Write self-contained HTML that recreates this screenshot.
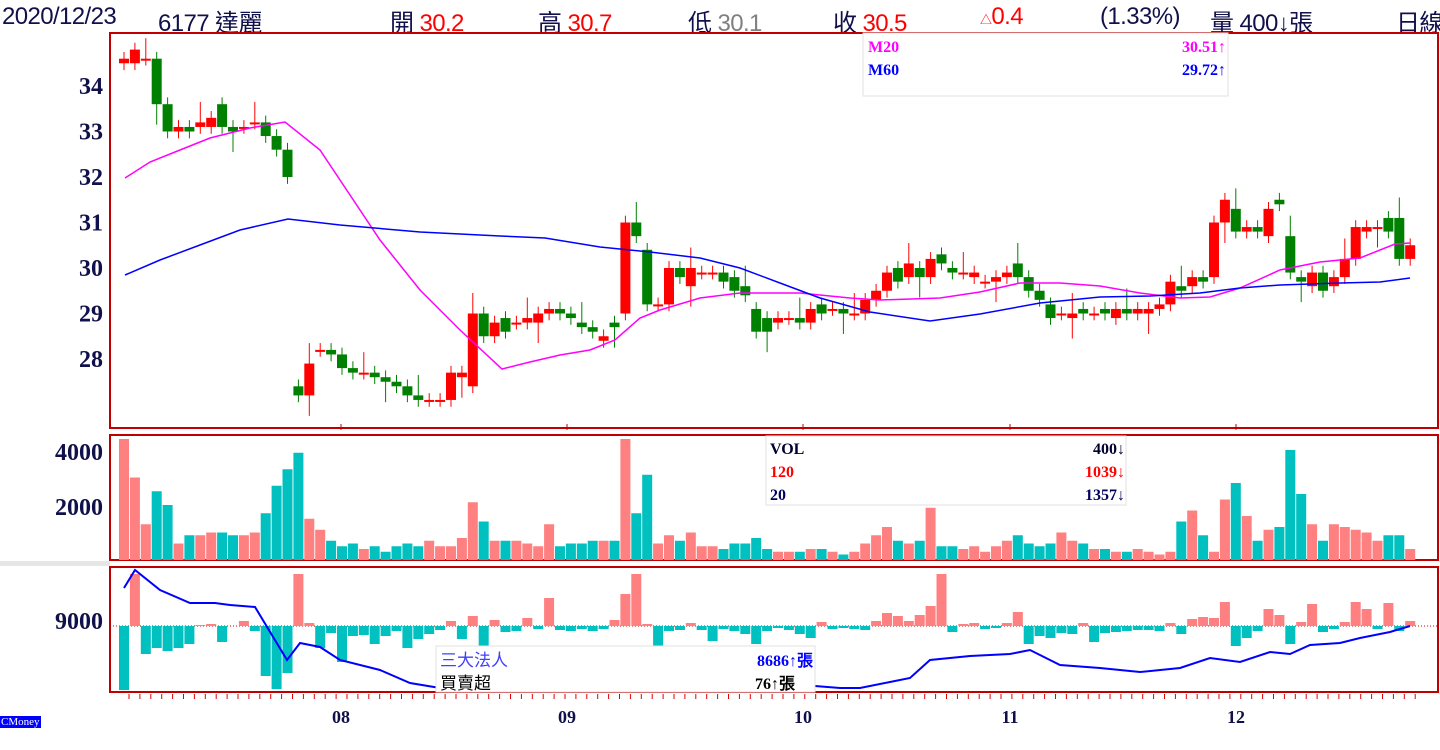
<!DOCTYPE html>
<html><head><meta charset="utf-8"><style>
body{margin:0;width:1440px;height:750px;background:#fff;overflow:hidden;position:relative;font-family:"Liberation Sans","Noto Sans CJK TC",sans-serif}
.h{position:absolute;top:3px;font-size:24px;color:#10104a;white-space:nowrap;letter-spacing:-0.6px}
.r{color:#f00}.g{color:#808080}
svg{position:absolute;left:0;top:0}
</style></head><body>
<div class="h" style="left:2px">2020/12/23</div>
<div class="h" style="left:158px">6177 達麗</div>
<div class="h" style="left:390px">開 <span class="r">30.2</span></div>
<div class="h" style="left:538px">高 <span class="r">30.7</span></div>
<div class="h" style="left:688px">低 <span class="g">30.1</span></div>
<div class="h" style="left:833px">收 <span class="r">30.5</span></div>
<div class="h" style="left:980px"><span class="r"><span style="font-size:12px">△</span>0.4</span></div>
<div class="h" style="left:1100px">(1.33%)</div>
<div class="h" style="left:1210px">量 400↓張</div>
<div class="h" style="left:1396px">日線</div>
<svg id="s" width="1440" height="750"></svg>
<div style="position:absolute;left:0;top:716px;background:#00f;color:#fff;font:11px 'Liberation Serif',serif;padding:0 1px">CMoney</div>
<script>
var C=[[34.5,34.6],[34.5,34.8],[34.6,34.6],[34.6,33.6],[33.6,33.0],[33.0,33.1],[33.1,33.0],[33.1,33.2],[33.1,33.3],[33.6,33.1],[33.1,33.0],[33.1,33.1],[33.2,33.2],[33.2,32.9],[32.9,32.6],[32.6,32.0],
[27.4,27.2],[27.2,27.9],[28.2,28.2],[28.2,28.1],[28.1,27.8],[27.8,27.7],[27.7,27.7],[27.7,27.6],[27.6,27.5],[27.5,27.4],[27.4,27.2],[27.2,27.1],[27.1,27.1],[27.1,27.1],[27.1,27.7],[27.6,27.7],[27.4,29.0],[29.0,28.5],[28.5,28.8],[28.9,28.6],[28.8,28.8],[28.8,28.9],[28.8,29.0],[29.0,29.1],[29.1,29.0],[29.0,28.9],[28.8,28.7],[28.7,28.6],[28.4,28.5],[28.8,28.7],[29.0,31.0],[31.0,30.7],[30.4,29.2],[29.2,29.2],[29.2,30.0],[30.0,29.8],[29.6,30.0],[29.9,29.9],[29.9,29.9],[29.9,29.7],[29.8,29.5],[29.6,29.4],[29.1,28.6],[28.9,28.6],[28.8,28.9],[28.9,28.9],[28.9,28.8],[28.8,29.1],[29.2,29.0],[29.1,29.1],[29.1,29.0],[29.0,29.0],[29.0,29.3],[29.3,29.5],[29.5,29.9],[30.0,29.7],[29.8,30.1],[30.0,29.8],[29.8,30.2],[30.3,30.1],[30.0,29.9],[29.9,29.9],[29.8,29.9],[29.7,29.7],[29.7,29.8],[29.8,29.9],[30.1,29.8],[29.8,29.5],[29.5,29.3],[29.2,28.9],[29.0,29.0],[28.9,29.0],[29.1,29.0],[29.0,29.0],[29.1,29.0],[28.9,29.1],[29.1,29.0],[29.0,29.1],[29.0,29.1],[29.1,29.2],[29.2,29.7],[29.6,29.5],[29.6,29.8],[29.8,29.7],[29.8,31.0],[31.0,31.5],[31.3,30.8],[30.8,30.9],[30.9,30.8],[30.7,31.3],[31.5,31.4],[30.7,29.9],[29.8,29.7],[29.6,29.9],[29.9,29.5],[29.6,29.8],[29.8,30.2],[30.2,30.9],[30.8,30.9],[30.9,30.9],[31.1,30.8],[31.1,30.2],[30.2,30.5]];
var V=[4400,3000,1300,2500,2000,600,900,900,1000,1000,900,900,1000,1700,2700,3300,3900,1500,1100,700,500,600,400,500,300,500,600,500,700,500,500,800,2100,1400,700,700,700,600,500,1300,500,600,600,700,700,700,4400,1700,3100,600,900,700,1000,500,500,400,600,600,800,400,300,300,300,400,400,300,200,300,600,900,1200,700,600,700,1900,500,500,400,500,300,500,700,900,600,500,600,1000,700,600,400,400,300,300,400,300,200,300,1400,1800,900,300,2200,2800,1600,700,1100,1200,4000,2400,1300,700,1300,1200,1100,1000,700,900,900,400];
var B=[-64,52,-28,-22,-25,-22,-18,1,2,-16,0,5,-5,-50,-63,-47,52,3,-22,-7,-36,-10,-9,-18,-10,-5,-22,-13,-8,-4,5,-13,10,-20,6,-6,-5,8,-3,28,-4,-5,-3,-5,-3,6,32,52,2,-20,-5,-4,3,-4,-15,-3,-5,-8,-18,-5,-2,-4,-8,-12,4,-3,-2,-3,-4,5,13,10,5,11,20,52,-6,2,3,-3,-2,3,14,-18,-10,-12,-7,-8,3,-16,-7,-6,-5,-4,-4,-5,3,-8,7,9,8,24,-20,-12,-5,17,11,-18,4,22,-6,-3,4,24,17,-3,23,-5,5];
function Y(p){return 86+(34-p)*45.5}
var s='';
s+='<rect x="110" y="33" width="1328" height="395" fill="none" stroke="#c00000" stroke-width="2"/>';
s+='<rect x="110" y="435" width="1328" height="125" fill="none" stroke="#c00000" stroke-width="2"/>';
s+='<rect x="0" y="561" width="110" height="5" fill="#e6e6e6"/>';
s+='<rect x="110" y="567" width="1328" height="125" fill="none" stroke="#c00000" stroke-width="2"/>';
s+='<line x1="110" y1="626" x2="1438" y2="626" stroke="#c00000" stroke-dasharray="1,2"/>';
for(var i=0;i<C.length;i++){var x=124+i*10.9,o=C[i][0],c=C[i][1],up=c>=o,col=up?'#f00':'#008000';
 var hi=Math.max(o,c)+0.15+(i%5==2?0.3:0),lo=Math.min(o,c)-0.15-(i%7==3?0.3:0);
 s+='<line x1="'+x+'" y1="'+Y(hi)+'" x2="'+x+'" y2="'+Y(lo)+'" stroke="'+col+'"/>';
 var t=Y(Math.max(o,c)),h=Math.max(2,Y(Math.min(o,c))-t);
 s+='<rect x="'+(x-5)+'" y="'+t+'" width="10" height="'+h+'" fill="'+col+'"/>';
 var vc=up?'#ff8080':'#00c0c0',vh=V[i]*0.0275;
 s+='<rect x="'+(x-5)+'" y="'+(560-vh)+'" width="10" height="'+vh+'" fill="'+vc+'"/>';
 var b=B[i],bc=b>=0?'#ff8080':'#00c0c0';
 s+='<rect x="'+(x-5)+'" y="'+(b>=0?626-b:626)+'" width="10" height="'+Math.abs(b)+'" fill="'+bc+'"/>';
 s+='<line x1="'+(x+5)+'" y1="694" x2="'+(x+5)+'" y2="699" stroke="#e00000"/>';
}
var m20="125,178 150,162 180,150 210,138 250,128 285,122 320,150 350,195 380,240 420,290 460,330 502,369 530,362 560,355 590,350 615,340 640,318 660,310 700,298 740,293 800,293 850,298 880,300 940,298 980,292 1020,283 1060,283 1100,286 1140,293 1180,298 1210,297 1240,288 1280,270 1320,262 1360,258 1395,244 1410,243";
var m60="125,275 160,260 200,245 240,230 288,219 340,225 420,232 500,236 545,238 600,247 650,252 700,258 740,268 780,283 820,298 870,312 930,321 980,314 1040,303 1100,297 1150,296 1200,293 1240,288 1280,285 1340,283 1380,282 1410,278";
s+='<polyline points="'+m20+'" fill="none" stroke="#f0f" stroke-width="1.5"/>';
s+='<polyline points="'+m60+'" fill="none" stroke="#00f" stroke-width="1.5"/>';
s+='<polyline points="124,588 135,570 160,590 190,603 215,603 230,605 255,607 287,660 300,643 320,647 340,660 380,670 410,683 440,688 815,686 840,688 860,688 890,682 910,678 930,660 970,656 1010,654 1030,650 1060,665 1100,668 1140,672 1180,668 1210,658 1240,662 1270,652 1290,654 1310,645 1340,643 1360,638 1390,632 1410,626" fill="none" stroke="#00f" stroke-width="2"/>';
var f='font-family="Liberation Serif,serif" font-weight="bold" fill="#10104a"';
[34,33,32,31,30,29,28].forEach(function(p){s+='<text x="103" y="'+(Y(p)+8)+'" text-anchor="end" font-size="24" '+f+'>'+p+'</text>'});
s+='<text x="103" y="460" text-anchor="end" font-size="24" '+f+'>4000</text>';
s+='<text x="103" y="515" text-anchor="end" font-size="24" '+f+'>2000</text>';
s+='<text x="103" y="629" text-anchor="end" font-size="24" '+f+'>9000</text>';
[[341,'08'],[567,'09'],[803,'10'],[1010,'11'],[1236,'12']].forEach(function(m){s+='<text x="'+m[0]+'" y="723" text-anchor="middle" font-size="18" '+f+'>'+m[1]+'</text>';s+='<line x1="'+m[0]+'" y1="424" x2="'+m[0]+'" y2="430" stroke="#c00000"/>'});
var lf='font-family="Liberation Serif,serif" font-weight="bold" font-size="16"';
s+='<rect x="863" y="33" width="365" height="63" fill="#fff" stroke="#e0e0e0"/>';
s+='<text x="868" y="52" fill="#f0f" '+lf+'>M20</text><text x="1226" y="52" text-anchor="end" fill="#f0f" '+lf+'>30.51↑</text>';
s+='<text x="868" y="75" fill="#00f" '+lf+'>M60</text><text x="1226" y="75" text-anchor="end" fill="#00f" '+lf+'>29.72↑</text>';
s+='<rect x="766" y="436" width="360" height="69" fill="#fff" stroke="#e0e0e0"/>';
s+='<text x="770" y="454" fill="#000030" '+lf+'>VOL</text><text x="1125" y="454" text-anchor="end" fill="#000030" '+lf+'>400↓</text>';
s+='<text x="770" y="477" fill="#f00" '+lf+'>120</text><text x="1125" y="477" text-anchor="end" fill="#f00" '+lf+'>1039↓</text>';
s+='<text x="770" y="500" fill="#000060" '+lf+'>20</text><text x="1125" y="500" text-anchor="end" fill="#000060" '+lf+'>1357↓</text>';
s+='<rect x="436" y="646" width="379" height="46" fill="#fff" stroke="#e0e0e0"/>';
s+='<text x="440" y="666" fill="#4040ff" font-size="17" font-family="Liberation Sans,Noto Sans CJK TC,sans-serif">三大法人</text>';
s+='<text x="440" y="689" fill="#000" font-size="17" font-family="Liberation Sans,Noto Sans CJK TC,sans-serif">買賣超</text>';
s+='<text x="813" y="666" text-anchor="end" fill="#00f" '+lf+'>8686↑張</text>';
s+='<text x="795" y="689" text-anchor="end" fill="#000" '+lf+'>76↑張</text>';
document.getElementById('s').innerHTML=s;
</script>
</body></html>
